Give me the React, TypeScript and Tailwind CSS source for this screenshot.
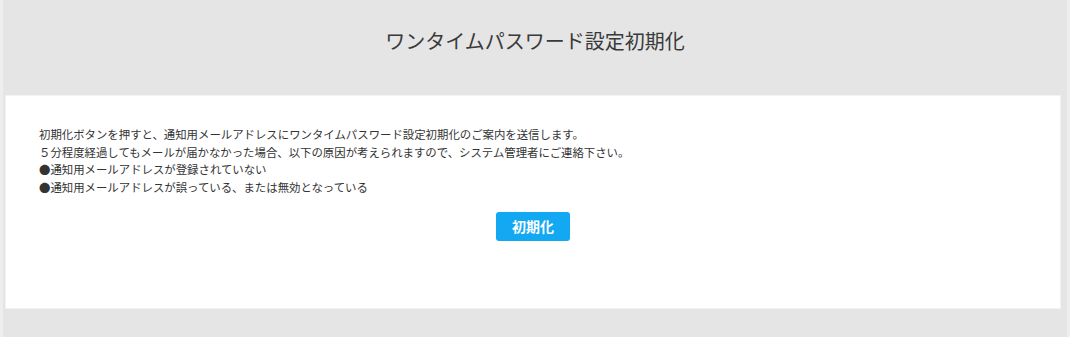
const bullets = [
  "通知用メールアドレスが登録されていない",
  "通知用メールアドレスが誤っている、または無効となっている",
];

const App = () => {
  return (
    <div
      className="h-[337px] w-full overflow-hidden border-x-[3px] border-[#eeeeee] bg-[#e5e5e5] text-[#333333]"
      style={{ fontFamily: '"Noto Sans CJK JP", "Noto Sans", sans-serif' }}
    >
      {/* Header */}
      <div className="flex h-[95px] items-center justify-center pb-[13px]">
        <h1 className="text-[20px] font-normal text-[#3a3a3a]">
          ワンタイムパスワード設定初期化
        </h1>
      </div>

      {/* Body */}
      <div className="ml-[2px] mr-[6px] h-[214px] border border-[#f2f2f2] bg-white px-[33px] pt-[30px]">
        <div className="text-[11.4px] leading-[17.5px] text-[#333333]">
          <p>初期化ボタンを押すと、通知用メールアドレスにワンタイムパスワード設定初期化のご案内を送信します。</p>
          <p>５分程度経過してもメールが届かなかった場合、以下の原因が考えられますので、システム管理者にご連絡下さい。</p>
          {bullets.map((b) => (
            <p key={b}>●{b}</p>
          ))}
        </div>

        <div className="mt-[16px] flex justify-center">
          <button
            type="button"
            className="h-[29px] w-[74px] rounded-[3px] bg-[#12a9f2] text-[14px] font-bold text-white"
          >
            初期化
          </button>
        </div>
      </div>
    </div>
  );
};

export default App;
